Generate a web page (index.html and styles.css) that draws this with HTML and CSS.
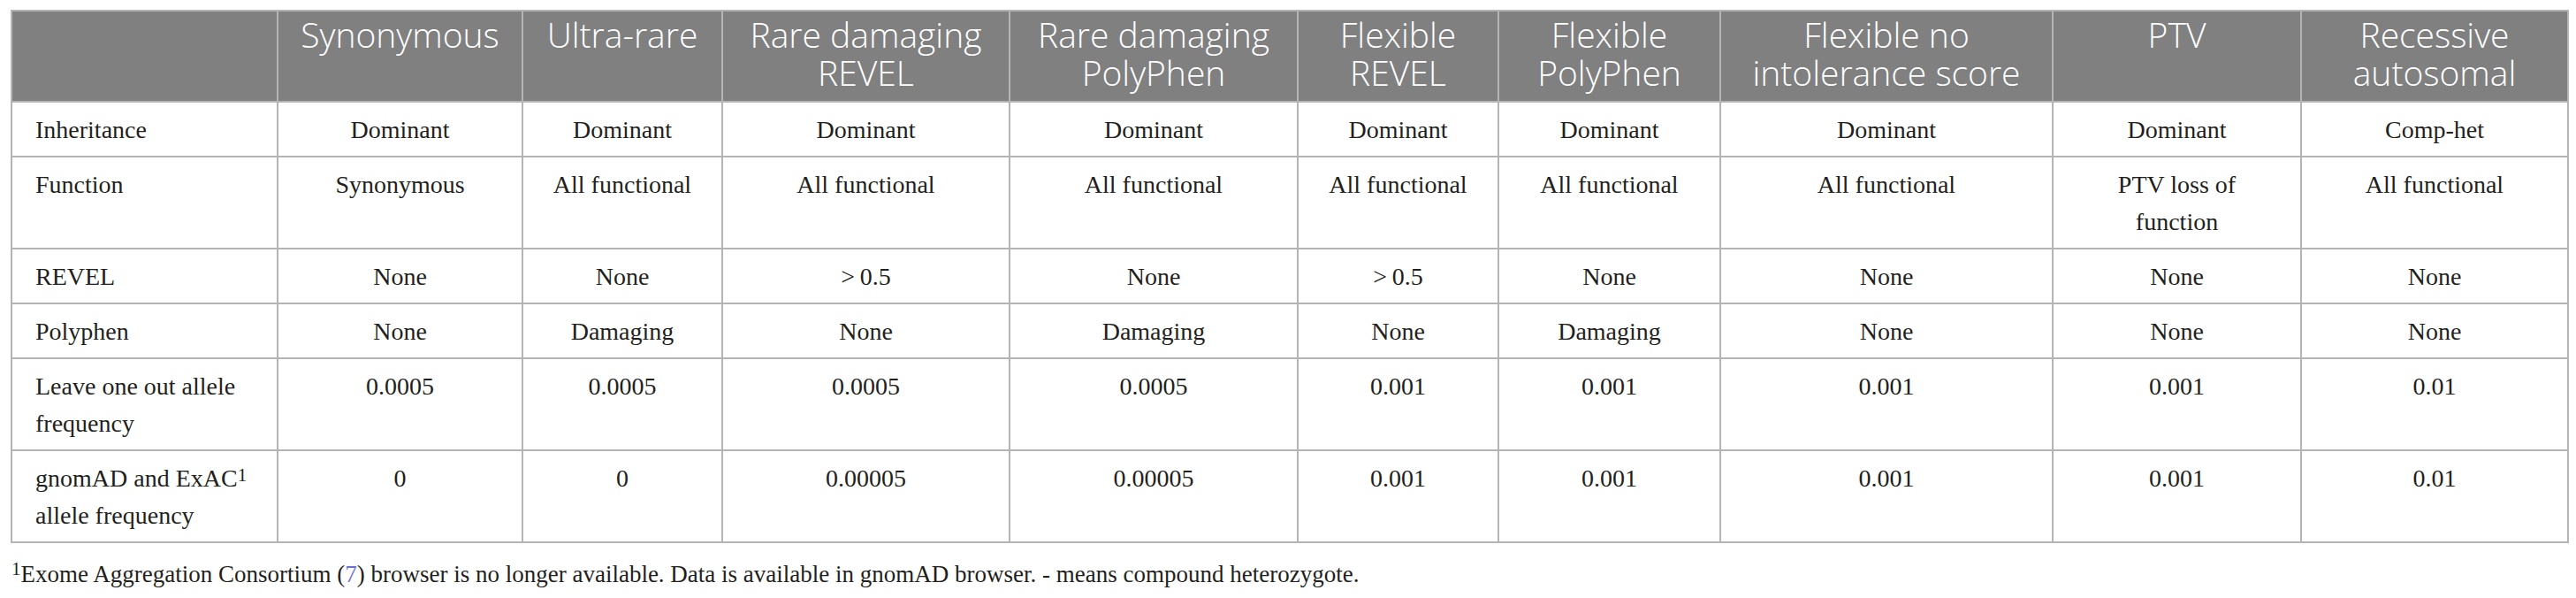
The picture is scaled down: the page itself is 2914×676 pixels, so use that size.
FILE: index.html
```html
<!DOCTYPE html>
<html lang="en">
<head>
    <meta charset="UTF-8">
    <meta name="viewport" content="width=device-width, initial-scale=1.0">
    <title>Variant filtering strategies</title>
    <link rel="stylesheet" href="styles.css">
</head>
<body>
    <div class="table-wrap">
        <table class="filters">
            <colgroup>
                <col class="col--label">
                <col class="col--syn">
                <col class="col--ultra">
                <col class="col--rdr">
                <col class="col--rdp">
                <col class="col--fr">
                <col class="col--fp">
                <col class="col--fnis">
                <col class="col--ptv">
                <col class="col--rec">
            </colgroup>
            <thead>
                <tr>
                    <th></th>
                    <th>Synonymous</th>
                    <th>Ultra-rare</th>
                    <th>Rare damaging<br>REVEL</th>
                    <th>Rare damaging<br>PolyPhen</th>
                    <th>Flexible<br>REVEL</th>
                    <th>Flexible<br>PolyPhen</th>
                    <th>Flexible no<br>intolerance score</th>
                    <th>PTV</th>
                    <th>Recessive<br>autosomal</th>
                </tr>
            </thead>
            <tbody>
                <tr>
                    <td>Inheritance</td>
                    <td>Dominant</td>
                    <td>Dominant</td>
                    <td>Dominant</td>
                    <td>Dominant</td>
                    <td>Dominant</td>
                    <td>Dominant</td>
                    <td>Dominant</td>
                    <td>Dominant</td>
                    <td>Comp-het</td>
                </tr>
                <tr>
                    <td>Function</td>
                    <td>Synonymous</td>
                    <td>All functional</td>
                    <td>All functional</td>
                    <td>All functional</td>
                    <td>All functional</td>
                    <td>All functional</td>
                    <td>All functional</td>
                    <td>PTV loss of<br>function</td>
                    <td>All functional</td>
                </tr>
                <tr>
                    <td>REVEL</td>
                    <td>None</td>
                    <td>None</td>
                    <td>&gt;&#8201;0.5</td>
                    <td>None</td>
                    <td>&gt;&#8201;0.5</td>
                    <td>None</td>
                    <td>None</td>
                    <td>None</td>
                    <td>None</td>
                </tr>
                <tr>
                    <td>Polyphen</td>
                    <td>None</td>
                    <td>Damaging</td>
                    <td>None</td>
                    <td>Damaging</td>
                    <td>None</td>
                    <td>Damaging</td>
                    <td>None</td>
                    <td>None</td>
                    <td>None</td>
                </tr>
                <tr>
                    <td>Leave one out allele<br>frequency</td>
                    <td>0.0005</td>
                    <td>0.0005</td>
                    <td>0.0005</td>
                    <td>0.0005</td>
                    <td>0.001</td>
                    <td>0.001</td>
                    <td>0.001</td>
                    <td>0.001</td>
                    <td>0.01</td>
                </tr>
                <tr>
                    <td>gnomAD and ExAC<sup>1</sup><br>allele frequency</td>
                    <td>0</td>
                    <td>0</td>
                    <td>0.00005</td>
                    <td>0.00005</td>
                    <td>0.001</td>
                    <td>0.001</td>
                    <td>0.001</td>
                    <td>0.001</td>
                    <td>0.01</td>
                </tr>
            </tbody>
        </table>
        <p class="footnote"><sup>1</sup>Exome Aggregation Consortium (<a class="ref" href="#">7</a>) browser is no longer available. Data is available in gnomAD browser. - means compound heterozygote.</p>
    </div>
</body>
</html>
```

FILE: styles.css
```css
html {
    box-sizing: border-box;
}
*, *::before, *::after {
    box-sizing: inherit;
}
body {
    margin: 0;
    background: #fff;
    color: #231f20;
    font-family: "Liberation Serif", "Times New Roman", serif;
    font-size: 28px;
}
.table-wrap {
    padding: 11px 0 0 12px;
}
.filters {
    border-collapse: collapse;
    table-layout: fixed;
    width: 2892px;
}
.col--label { width: 301px; }
.col--syn { width: 277px; }
.col--ultra { width: 226px; }
.col--rdr { width: 325px; }
.col--rdp { width: 326px; }
.col--fr { width: 227px; }
.col--fp { width: 251px; }
.col--fnis { width: 376px; }
.col--ptv { width: 281px; }
.col--rec { width: 302px; }

.filters th,
.filters td {
    border: 2px solid #b4b4b4;
    vertical-align: top;
    text-align: center;
}
.filters th {
    background-color: #808080;
    color: #fff;
    font-family: "Open Sans", "Liberation Sans", sans-serif;
    font-weight: 300;
    font-size: 39px;
    line-height: 43px;
    padding: 4px 6px 11px;
    white-space: nowrap;
}
.filters td {
    line-height: 42px;
    padding: 10px 10px 8px;
}
.filters td:first-child {
    text-align: left;
    padding-left: 26px;
}
.filters sup {
    font-size: 0.75em;
    line-height: 0;
    vertical-align: 0.3em;
}
.footnote {
    margin: 14px 0 0 1px;
    font-size: 27px;
    line-height: 42px;
}
.footnote sup {
    font-size: 0.78em;
    line-height: 0;
    vertical-align: 0.36em;
}
.ref {
    color: #6d6dd8;
    text-decoration: none;
}
```
